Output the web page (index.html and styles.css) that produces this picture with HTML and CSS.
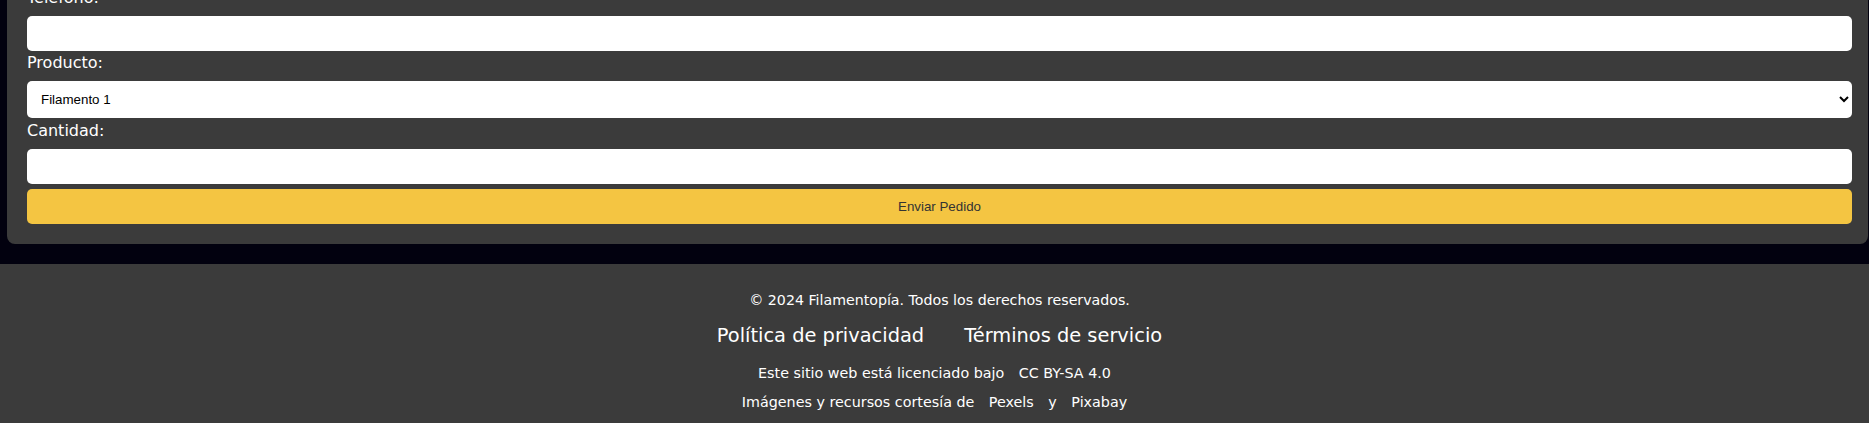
FILE: index.html
```html
<!DOCTYPE html>
<html lang="es">
<head>
<meta charset="utf-8">
<title>Filamentopía - Pedido</title>
<link rel="stylesheet" href="styles.css">
</head>
<body>
<main class="page">
  <section class="order-card">
    <form class="order-form">
      <label class="field-label" for="tel">Teléfono:</label>
      <input class="field-input" id="tel" type="tel">
      <label class="field-label" for="prod">Producto:</label>
      <select class="field-select" id="prod">
        <option>Filamento 1</option>
        <option>Filamento 2</option>
      </select>
      <label class="field-label" for="qty">Cantidad:</label>
      <input class="field-input" id="qty" type="number">
      <button class="submit-btn" type="button">Enviar Pedido</button>
    </form>
  </section>
</main>
<footer class="site-footer">
  <p class="copyright">© 2024 Filamentopía. Todos los derechos reservados.</p>
  <nav class="footer-links">
    <a class="footer-link" href="#">Política de privacidad</a>
    <a class="footer-link" href="#">Términos de servicio</a>
  </nav>
  <p class="footer-note">Este sitio web está licenciado bajo <a class="note-link" href="#">CC BY-SA 4.0</a></p>
  <p class="footer-note footer-note-last">Imágenes y recursos cortesía de <a class="note-link" href="#">Pexels</a> y <a class="note-link" href="#">Pixabay</a></p>
</footer>
</body>
</html>
```
FILE: styles.css
```css
* { box-sizing: border-box; }

html, body {
  margin: 0;
  padding: 0;
}

body {
  background: #02010f;
  font-family: "DejaVu Sans", "Noto Sans", sans-serif;
  color: #ffffff;
  overflow: hidden;
}

.page {
  margin: -34px 1px 20px 7px;
}

.order-card {
  background: #3b3b3b;
  border-radius: 0 0 8px 8px;
  padding: 20px 16px 20px 20px;
}

.order-form {
  display: flex;
  flex-direction: column;
}

.field-label {
  display: block;
  font-size: 16px;
  line-height: 24px;
  margin: 0 0 6px;
  color: #ffffff;
}

.field-input,
.field-select {
  display: block;
  width: 100%;
  border: none;
  border-radius: 5px;
  background: #ffffff;
  font-family: Arial, "Liberation Sans", sans-serif;
  font-size: 13.33px;
  color: #000000;
  outline: none;
}

.field-input {
  height: 35px;
  padding: 0 10px;
}

.field-select {
  height: 37px;
  padding: 0 10px;
  margin-bottom: 1px;
}

.submit-btn {
  display: block;
  width: 100%;
  height: 35px;
  margin-top: 5px;
  border: none;
  border-radius: 5px;
  background: #f4c542;
  color: #333333;
  font-family: Arial, "Liberation Sans", sans-serif;
  font-size: 13.33px;
  cursor: pointer;
}

.site-footer {
  background: #3b3b3b;
  padding: 24px 0 20px 10px;
  text-align: center;
  height: 200px;
}

.copyright {
  margin: 0;
  font-size: 14.2px;
  line-height: 24px;
}

.footer-links {
  display: flex;
  justify-content: center;
  margin: 10px 0 0;
}

.footer-link {
  color: #ffffff;
  text-decoration: none;
  font-size: 19.4px;
  line-height: 27px;
  margin: 0 20px;
}

.footer-note {
  margin: 12px 0 0;
  font-size: 14.3px;
  line-height: 24px;
}

.footer-note-last {
  margin-top: 5px;
}

.note-link {
  color: #ffffff;
  text-decoration: none;
  margin: 0 10px;
}
```
